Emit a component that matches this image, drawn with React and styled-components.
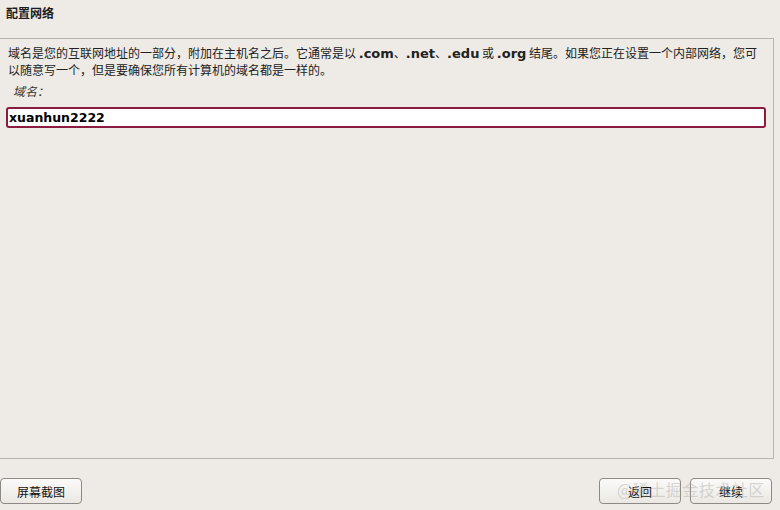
import React, { useState } from 'react';
import styled, { createGlobalStyle } from 'styled-components';

const GlobalStyle = createGlobalStyle`
  html, body {
    margin: 0;
    padding: 0;
    background: #eeebe6;
  }
  body {
    font-family: "DejaVu Sans", "Noto Sans CJK SC", sans-serif;
    color: #1c1c1c;
  }
`;

const Window = styled.div`
  position: relative;
  width: 780px;
  height: 510px;
  display: flex;
  flex-direction: column;
  background: #eeebe6;
  overflow: hidden;
`;

const Header = styled.div`
  height: 38px;
  padding: 5px 0 0 6px;
  box-sizing: border-box;
`;

const Title = styled.h1`
  margin: 0;
  font-size: 12px;
  font-weight: bold;
  font-family: "Noto Sans CJK SC", sans-serif;
  line-height: 16px;
`;

const Panel = styled.div`
  flex: 1;
  margin-right: 6px;
  border-top: 1px solid #b9b5ae;
  border-right: 1px solid #b9b5ae;
  border-bottom: 1px solid #b9b5ae;
  padding: 5px 8px 0 6px;
  display: flex;
  flex-direction: column;
`;

const Description = styled.p`
  margin: 0 0 0 2px;
  font-size: 12px;
  line-height: 17px;
  font-family: "Noto Sans CJK SC", sans-serif;
  color: #222;
`;

const Code = styled.b`
  font-family: "DejaVu Sans", sans-serif;
  font-size: 13px;
  line-height: 1;
  font-weight: bold;
`;

const Label = styled.label`
  display: block;
  margin: 4px 0 0 7px;
  font-size: 12px;
  line-height: 17px;
  font-style: italic;
  font-family: "Noto Sans CJK SC", sans-serif;
  color: #333;
`;

const Input = styled.input`
  margin-top: 8px;
  height: 21px;
  box-sizing: border-box;
  width: 760px;
  border: 2px solid #8c1b42;
  border-radius: 3px;
  background: #fff;
  padding: 0 1px;
  font-family: "DejaVu Sans", sans-serif;
  font-weight: bold;
  font-size: 12.5px;
  color: #000;
  outline: none;
  caret-color: #000;
`;

const Footer = styled.div`
  height: 51px;
  display: flex;
  align-items: flex-start;
  justify-content: space-between;
  padding: 19px 8px 0 0;
  box-sizing: border-box;
`;

const ButtonGroup = styled.div`
  display: flex;
  gap: 9px;
`;

const Button = styled.button`
  width: 82px;
  height: 26px;
  border: 1px solid #8d8a85;
  border-radius: 4px;
  background: linear-gradient(#fbfaf9, #ebe8e3);
  font-family: "Noto Sans CJK SC", sans-serif;
  font-size: 12px;
  color: #111;
  padding: 0;
`;

const Watermark = styled.div`
  position: absolute;
  left: 617px;
  top: 477px;
  font-family: "Noto Sans CJK SC", sans-serif;
  font-size: 16px;
  color: rgba(160, 160, 160, 0.4);
  pointer-events: none;
  letter-spacing: 0.5px;
`;

export default function App() {
  const [domain, setDomain] = useState('xuanhun2222');
  return (
    <Window>
      <GlobalStyle />
      <Header>
        <Title>配置网络</Title>
      </Header>
      <Panel>
        <Description>
          域名是您的互联网地址的一部分，附加在主机名之后。它通常是以 <Code>.com</Code>、<Code>.net</Code>、<Code>.edu</Code> 或 <Code>.org</Code> 结尾。如果您正在设置一个内部网络，您可以随意写一个，但是要确保您所有计算机的域名都是一样的。
        </Description>
        <Label htmlFor="domain">域名：</Label>
        <Input id="domain" value={domain} onChange={(e) => setDomain(e.target.value)} autoFocus />
      </Panel>
      <Footer>
        <Button>屏幕截图</Button>
        <ButtonGroup>
          <Button>返回</Button>
          <Button>继续</Button>
        </ButtonGroup>
      </Footer>
      <Watermark>@稀土掘金技术社区</Watermark>
    </Window>
  );
}
